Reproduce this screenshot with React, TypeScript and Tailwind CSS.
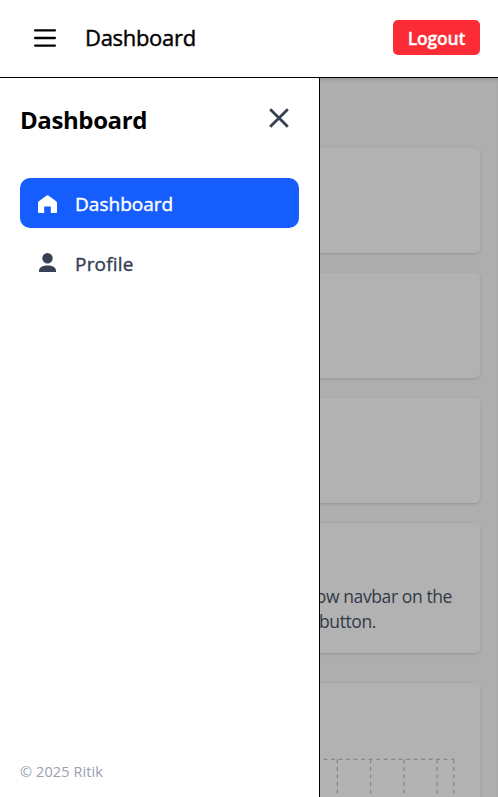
import React from "react";

const columns = [304, 337.3, 370.6, 404, 437.2, 453.8];

function Card({ className, children }: { className: string; children?: React.ReactNode }) {
  return (
    <section className={`shrink-0 rounded-[5px] bg-white shadow-[0_1px_4px_rgba(0,0,0,0.1),0_1px_2px_rgba(0,0,0,0.06)] ${className}`}>
      {children}
    </section>
  );
}

function Header() {
  return (
    <header className="flex h-[78px] shrink-0 items-center justify-between border-b border-black bg-white pr-[18px] pb-[2px] pl-[33px]">
      <div className="flex items-center gap-[28px]">
        <button aria-label="Menu" className="block">
          <svg width="24" height="24" viewBox="0 0 24 24" fill="none" stroke="#000" strokeWidth="2.3" strokeLinecap="round">
            <path d="M2.1 4.4H21.9M2.1 12H21.9M2.1 19.6H21.9" />
          </svg>
        </button>
        <h1 className="mt-[-2px] text-[22px] leading-[30px] font-medium tracking-[-0.3px] [-webkit-text-stroke:0.4px_#000]">Dashboard</h1>
      </div>
      <button className="h-[35px] w-[87px] rounded-[5px] bg-[#fb2c36] text-[17.5px] leading-[36px] font-semibold tracking-[-0.2px] text-white [-webkit-text-stroke:0.3px_#fff]">
        Logout
      </button>
    </header>
  );
}

function Sidebar() {
  return (
    <aside className="absolute inset-y-0 left-0 flex w-[320px] flex-col border-r border-black bg-white px-[20px]">
      <div className="mt-[24px] flex h-[34px] items-center justify-between pr-[9px]">
        <h2 className="mt-[2px] text-[24px] leading-[34px] font-bold tracking-[-0.4px] text-black">Dashboard</h2>
        <button aria-label="Close" className="mt-[-2px]">
          <svg width="22" height="22" viewBox="0 0 22 22" fill="none" stroke="#364153" strokeWidth="2.8">
            <path d="M2.2 2.2L19.8 19.8M19.8 2.2L2.2 19.8" />
          </svg>
        </button>
      </div>
      <nav className="mt-[42px] flex flex-col gap-[10px] text-[19px] font-medium [-webkit-text-stroke:0.4px_currentColor]">
        <a className="flex h-[50px] items-center gap-[17px] rounded-[10px] bg-[#155dfc] pl-[17px] text-white">
          <svg width="21" height="20" viewBox="0 0 21 20" fill="currentColor" className="mt-[2px]">
            <path d="M9.7 1.5a1.3 1.3 0 0 1 1.6 0l7.9 5.7q.8.6.8 1.6v9.2a1 1 0 0 1-1 1h-5.2v-6.4H7.2v6.4H2a1 1 0 0 1-1-1V8.8q0-1 .8-1.6z" />
          </svg>
          <span className="mt-[2px] leading-[50px] tracking-[0.02px]">Dashboard</span>
        </a>
        <a className="flex h-[50px] items-center gap-[17px] pl-[17px] text-[#364153]">
          <svg width="21" height="20" viewBox="0 0 21 20" fill="currentColor">
            <circle cx="10.5" cy="5.2" r="5.2" />
            <path d="M2 18.9v-1.2c0-3.3 3.8-5.1 8.5-5.1s8.5 1.8 8.5 5.1v1.2z" />
          </svg>
          <span className="mt-[2px] leading-[50px] tracking-[0.2px]">Profile</span>
        </a>
      </nav>
      <p className="mt-auto mb-[14px] text-[14.5px] leading-[22px] tracking-[0.1px] text-[#99a1af]">© 2025 Ritik</p>
    </aside>
  );
}

export default function App() {
  return (
    <div className="flex h-[797px] w-[498px] flex-col overflow-hidden font-['Open_Sans','Noto_Sans',sans-serif] text-black">
      <Header />
      <div className="relative min-h-0 flex-1 overflow-hidden bg-[#f9fafb]">
        <main className="flex h-full flex-col gap-[20px] overflow-hidden pt-[70px] pr-[18px] pl-[20px]">
          <Card className="h-[105px]" />
          <Card className="h-[105px]" />
          <Card className="h-[105px]" />
          <Card className="mb-[10px] h-[130px] pt-[61px] pr-[28px] text-right text-[17.5px] leading-[25px] tracking-[-0.4px] text-[#4a5565]">
            <p>ow navbar on the</p>
            <p className="pr-[76px]">button.</p>
          </Card>
          <Card className="h-[300px]">
            <svg width="460" height="300" viewBox="20 683 460 300" fill="none" stroke="#c2c2c2" strokeWidth="1.35" strokeDasharray="3.75 3.75">
              <path d="M301.2 759.4H454" />
              {columns.map((x) => (
                <path key={x} d={`M${x} 759.4V983`} />
              ))}
            </svg>
          </Card>
        </main>
        <div className="absolute inset-0 bg-black/30 shadow-[inset_0_3px_4px_-2px_rgba(0,0,0,0.18)]" />
        <Sidebar />
      </div>
    </div>
  );
}
